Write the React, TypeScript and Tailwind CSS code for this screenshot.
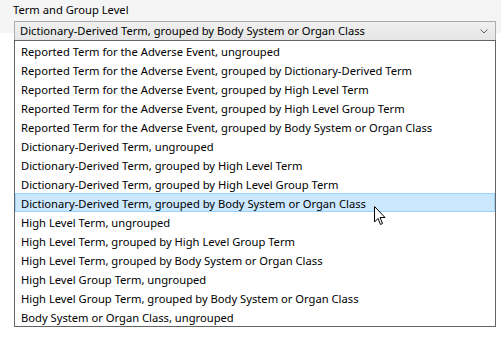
import React from "react";

const items = [
  "Reported Term for the Adverse Event, ungrouped",
  "Reported Term for the Adverse Event, grouped by Dictionary-Derived Term",
  "Reported Term for the Adverse Event, grouped by High Level Term",
  "Reported Term for the Adverse Event, grouped by High Level Group Term",
  "Reported Term for the Adverse Event, grouped by Body System or Organ Class",
  "Dictionary-Derived Term, ungrouped",
  "Dictionary-Derived Term, grouped by High Level Term",
  "Dictionary-Derived Term, grouped by High Level Group Term",
  "Dictionary-Derived Term, grouped by Body System or Organ Class",
  "High Level Term, ungrouped",
  "High Level Term, grouped by High Level Group Term",
  "High Level Term, grouped by Body System or Organ Class",
  "High Level Group Term, ungrouped",
  "High Level Group Term, grouped by Body System or Organ Class",
  "Body System or Organ Class, ungrouped",
];

export default function App() {
  return (
    <div
      className="w-[501px] h-[342px] bg-white text-[11.2px] text-black overflow-hidden relative"
      style={{ fontFamily: '"Noto Sans", sans-serif' }}
    >
      <div className="bg-[#f5f5f5] h-[33px] px-[13px] pt-[1px]">
        <div className="leading-[18px]">Term and Group Level</div>
      </div>
      <div className="absolute left-[14px] top-[21px] w-[482px] h-[20px] border border-[#acacac] bg-gradient-to-b from-[#f0f0f0] to-[#e5e5e5] flex items-center pl-[5px] pr-[6px]">
        <span className="flex-1 leading-[18px]">Dictionary-Derived Term, grouped by Body System or Organ Class</span>
        <svg width="8" height="5" viewBox="0 0 8 5" className="mr-[1px]">
          <path d="M0.5 0.5 L4 4 L7.5 0.5" fill="none" stroke="#606060" strokeWidth="1" />
        </svg>
      </div>
      <div className="absolute left-[14px] top-[40px] w-[482px] border border-[#646464] bg-white">
        {items.map((t, i) => (
          <div
            key={i}
            className={
              "h-[19px] leading-[19px] pl-[5px] border whitespace-nowrap " +
              (i === 8 ? "bg-[#cce8ff] border-[#99d1ff]" : "border-transparent")
            }
          >
            {t}
          </div>
        ))}
      </div>
      <svg className="absolute left-[374px] top-[206px]" width="13" height="20" viewBox="0 0 13 20">
        <path d="M0.5 0.5 L0.5 16 L4 12.5 L6.5 18.5 L8.5 17.5 L6 11.5 L11 11.5 Z" fill="white" stroke="black" strokeWidth="1" strokeLinejoin="miter" />
      </svg>
    </div>
  );
}
